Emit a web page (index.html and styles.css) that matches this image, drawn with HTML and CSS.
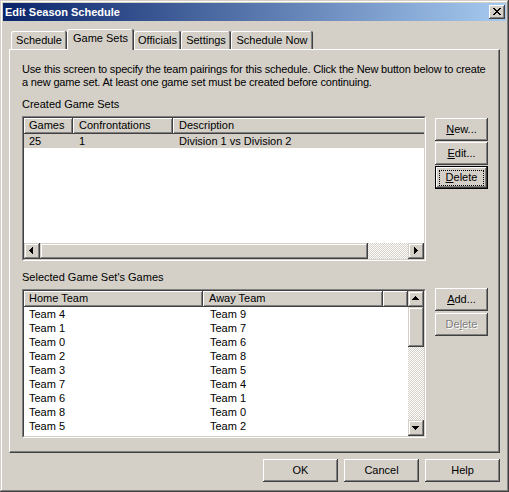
FILE: index.html
```html
<!DOCTYPE html>
<html>
<head>
<meta charset="utf-8">
<title>Edit Season Schedule</title>
<link rel="stylesheet" href="styles.css">
</head>
<body>
<div class="window">
  <div class="titlebar">
    <span class="title">Edit Season Schedule</span>
    <div class="close-btn">
      <svg class="close-glyph" width="8" height="7" viewBox="0 0 8 7" shape-rendering="crispEdges"><path fill="#000" d="M0 0h2v1H0z M6 0h2v1H6z M1 1h2v1H1z M5 1h2v1H5z M2 2h4v1H2z M3 3h2v1H3z M2 4h4v1H2z M1 5h2v1H1z M5 5h2v1H5z M0 6h2v1H0z M6 6h2v1H6z"/></svg>
    </div>
  </div>
  <div class="client">
    <div class="tabs">
      <div class="tab tab-schedule">Schedule</div>
      <div class="tab tab-gamesets active">Game Sets</div>
      <div class="tab tab-officials">Officials</div>
      <div class="tab tab-settings">Settings</div>
      <div class="tab tab-now">Schedule Now</div>
    </div>
    <div class="panel">
      <p class="intro">Use this screen to specify the team pairings for this schedule. Click the New button below to create<br>a new game set. At least one game set must be created before continuing.</p>

      <div class="section section-sets">
        <div class="section-main">
          <div class="label">Created Game Sets</div>
          <div class="list list-sets">
            <div class="list-inner">
              <div class="list-header">
                <div class="hcell col-games">Games</div>
                <div class="hcell col-conf">Confrontations</div>
                <div class="hcell col-desc">Description</div>
              </div>
              <div class="list-body">
                <div class="row selected">
                  <div class="cell col-games">25</div>
                  <div class="cell col-conf">1</div>
                  <div class="cell col-desc">Division 1 vs Division 2</div>
                </div>
              </div>
              <div class="hscroll">
                <div class="sbtn"><svg class="arrow arrow-left" width="16" height="16" viewBox="0 0 16 16" shape-rendering="crispEdges"><path fill="#000" d="M8 4h1v7H8z M7 5h1v5H7z M6 6h1v3H6z M5 7h1v1H5z"/></svg></div>
                <div class="thumb thumb-h"></div>
                <div class="track"></div>
                <div class="sbtn"><svg class="arrow" width="16" height="16" viewBox="0 0 16 16" shape-rendering="crispEdges"><path fill="#000" d="M6 4h1v7H6z M7 5h1v5H7z M8 6h1v3H8z M9 7h1v1H9z"/></svg></div>
              </div>
            </div>
          </div>
        </div>
        <div class="side-buttons side-sets">
          <div class="btn"><span><u>N</u>ew...</span></div>
          <div class="btn"><span><u>E</u>dit...</span></div>
          <div class="btn btn-default"><span><u>D</u>elete</span></div>
        </div>
      </div>

      <div class="section section-games">
        <div class="section-main">
          <div class="label">Selected Game Set's Games</div>
          <div class="list list-games">
            <div class="list-inner list-inner-row">
              <div class="list-content">
                <div class="list-header">
                  <div class="hcell col-home">Home Team</div>
                  <div class="hcell col-away">Away Team</div>
                  <div class="hcell col-fill"></div>
                </div>
                <div class="list-body">
                  <div class="row"><div class="cell col-home">Team 4</div><div class="cell col-away">Team 9</div></div>
                  <div class="row"><div class="cell col-home">Team 1</div><div class="cell col-away">Team 7</div></div>
                  <div class="row"><div class="cell col-home">Team 0</div><div class="cell col-away">Team 6</div></div>
                  <div class="row"><div class="cell col-home">Team 2</div><div class="cell col-away">Team 8</div></div>
                  <div class="row"><div class="cell col-home">Team 3</div><div class="cell col-away">Team 5</div></div>
                  <div class="row"><div class="cell col-home">Team 7</div><div class="cell col-away">Team 4</div></div>
                  <div class="row"><div class="cell col-home">Team 6</div><div class="cell col-away">Team 1</div></div>
                  <div class="row"><div class="cell col-home">Team 8</div><div class="cell col-away">Team 0</div></div>
                  <div class="row"><div class="cell col-home">Team 5</div><div class="cell col-away">Team 2</div></div>
                  <div class="row"><div class="cell col-home">Team 9</div><div class="cell col-away">Team 3</div></div>
                </div>
              </div>
              <div class="vscroll">
                <div class="sbtn"><svg class="arrow" width="16" height="16" viewBox="0 0 16 16" shape-rendering="crispEdges"><path fill="#000" d="M7 5h1v1H7z M6 6h3v1H6z M5 7h5v1H5z M4 8h7v1H4z"/></svg></div>
                <div class="thumb thumb-v"></div>
                <div class="track"></div>
                <div class="sbtn"><svg class="arrow" width="16" height="16" viewBox="0 0 16 16" shape-rendering="crispEdges"><path fill="#000" d="M4 6h7v1H4z M5 7h5v1H5z M6 8h3v1H6z M7 9h1v1H7z"/></svg></div>
              </div>
            </div>
          </div>
        </div>
        <div class="side-buttons side-games">
          <div class="btn"><span><u>A</u>dd...</span></div>
          <div class="btn btn-disabled"><span>De<u>l</u>ete</span></div>
        </div>
      </div>
    </div>
    <div class="dialog-buttons">
      <div class="btn btn-wide"><span>OK</span></div>
      <div class="btn btn-wide"><span>Cancel</span></div>
      <div class="btn btn-wide"><span>Help</span></div>
    </div>
  </div>
</div>
</body>
</html>
```

FILE: styles.css
```css
* { box-sizing: border-box; }
html, body { margin: 0; padding: 0; }
body {
  background: #d4d0c8;
  font-family: "Liberation Sans", Arial, sans-serif;
  font-size: 11px;
  color: #000;
}
.window {
  width: 509px;
  height: 492px;
  padding: 3px;
  background: #d4d0c8;
  box-shadow: inset -1px -1px #404040, inset 1px 1px #d4d0c8, inset -2px -2px #808080, inset 2px 2px #fff;
  display: flex;
  flex-direction: column;
}
.titlebar {
  height: 18px;
  width: 503px;
  background: linear-gradient(to right, #0a246a, #a6caf0);
  display: flex;
  align-items: center;
  justify-content: space-between;
  padding: 0 1px 0 2px;
}
.title {
  color: #fff;
  font-weight: bold;
  font-size: 11px;
  line-height: 13px;
}
.close-btn {
  width: 16px;
  height: 14px;
  background: #d4d0c8;
  box-shadow: inset -1px -1px #404040, inset 1px 1px #fff, inset -2px -2px #808080, inset 2px 2px #d4d0c8;
  padding: 3px 0 0 4px;
}
.close-glyph { display: block; }

.client {
  padding: 8px 0 0 6px;
  display: flex;
  flex-direction: column;
}
.tabs {
  display: flex;
  align-items: flex-end;
  height: 20px;
  padding-left: 2px;
}
.tab {
  height: 18px;
  line-height: 17px;
  padding-top: 1px;
  text-align: center;
  background: #d4d0c8;
  border-radius: 2px 2px 0 0;
  box-shadow: inset -1px 0 #404040, inset 1px 1px #fff, inset -2px 0 #808080;
}
.tab.active {
  height: 21px;
  margin-bottom: -1px;
  line-height: 17px;
  padding-top: 1px;
  position: relative;
  z-index: 1;
}
.tab-schedule { width: 56px; }
.tab-gamesets { width: 67px; }
.tab-officials { width: 47px; }
.tab-settings { width: 50px; }
.tab-now { width: 82px; }

.panel {
  width: 491px;
  height: 404px;
  border-top: 1px solid #fff;
  border-left: 1px solid #fff;
  border-right: 1px solid #404040;
  border-bottom: 1px solid #404040;
  box-shadow: inset -1px -1px #808080;
  padding: 13px 0 0 12px;
}
.intro {
  margin: 0;
  line-height: 13px;
  white-space: nowrap;
  letter-spacing: -0.17px;
}
.section {
  display: flex;
  gap: 9px;
}
.section-sets { margin-top: 9px; }
.section-games { margin-top: 10px; }
.label {
  line-height: 13px;
  margin-bottom: 5px;
}
.list {
  width: 404px;
  border: 1px solid;
  border-color: #808080 #fff #fff #808080;
}
.list-sets { height: 145px; }
.list-games { height: 149px; }
.list-inner {
  height: 100%;
  border: 1px solid;
  border-color: #404040 #d4d0c8 #d4d0c8 #404040;
  background: #fff;
  display: flex;
  flex-direction: column;
  overflow: hidden;
}
.list-inner-row { flex-direction: row; }
.list-content {
  width: 384px;
  display: flex;
  flex-direction: column;
  overflow: hidden;
}
.list-header {
  display: flex;
  height: 16px;
  flex: none;
  overflow: hidden;
}
.hcell {
  flex: none;
  height: 16px;
  line-height: 15px;
  padding-left: 6px;
  white-space: nowrap;
  background: #d4d0c8;
  box-shadow: inset -1px -1px #404040, inset 1px 1px #fff, inset -2px -2px #808080;
}
.list-body {
  flex: 1;
  overflow: hidden;
}
.row {
  display: flex;
  height: 14px;
  line-height: 14px;
  white-space: nowrap;
}
.row.selected { background: #d4d0c8; }
.cell {
  flex: none;
  padding-left: 6px;
  overflow: hidden;
}
.hcell:first-child, .cell:first-child { padding-left: 5px; }
.col-games { width: 49px; }
.col-conf { width: 100px; }
.col-desc { width: 300px; }
.col-home { width: 179px; }
.col-away { width: 180px; }
.col-fill { width: 25px; }
.list-games .cell.col-away { padding-left: 7px; }
.list-games .hcell.col-away { padding-left: 6px; }

.hscroll {
  height: 16px;
  flex: none;
  display: flex;
}
.vscroll {
  width: 16px;
  flex: none;
  display: flex;
  flex-direction: column;
}
.sbtn {
  width: 16px;
  height: 16px;
  flex: none;
  background: #d4d0c8;
  box-shadow: inset -1px -1px #404040, inset 1px 1px #d4d0c8, inset -2px -2px #808080, inset 2px 2px #fff;
}
.arrow { display: block; }
.thumb {
  flex: none;
  background: #d4d0c8;
  box-shadow: inset -1px -1px #404040, inset 1px 1px #d4d0c8, inset -2px -2px #808080, inset 2px 2px #fff;
}
.thumb-h { width: 328px; height: 16px; }
.thumb-v { height: 40px; width: 16px; }
.track {
  flex: 1;
  background-color: #d4d0c8;
  background-image: repeating-conic-gradient(#fff 0% 25%, #d4d0c8 0% 50%);
  background-size: 2px 2px;
}

.side-buttons {
  display: flex;
  flex-direction: column;
}
.side-sets { padding-top: 20px; gap: 1px; }
.side-games { padding-top: 17px; gap: 2px; }
.btn {
  width: 53px;
  height: 23px;
  background: #d4d0c8;
  box-shadow: inset -1px -1px #404040, inset 1px 1px #fff, inset -2px -2px #808080, inset 2px 2px #d4d0c8;
  display: flex;
  align-items: center;
  justify-content: center;
  line-height: 13px;
  position: relative;
}
.btn-default {
  border: 1px solid #000;
}
.btn-default::after {
  content: "";
  position: absolute;
  left: 3px;
  right: 3px;
  top: 3px;
  bottom: 2px;
  border: 1px dotted #000;
}
.btn-disabled {
  color: #808080;
  text-shadow: 1px 1px #fff;
}
.btn-wide { width: 75px; }
.dialog-buttons {
  width: 491px;
  margin-top: 6px;
  display: flex;
  justify-content: flex-end;
  gap: 6px;
}
```
